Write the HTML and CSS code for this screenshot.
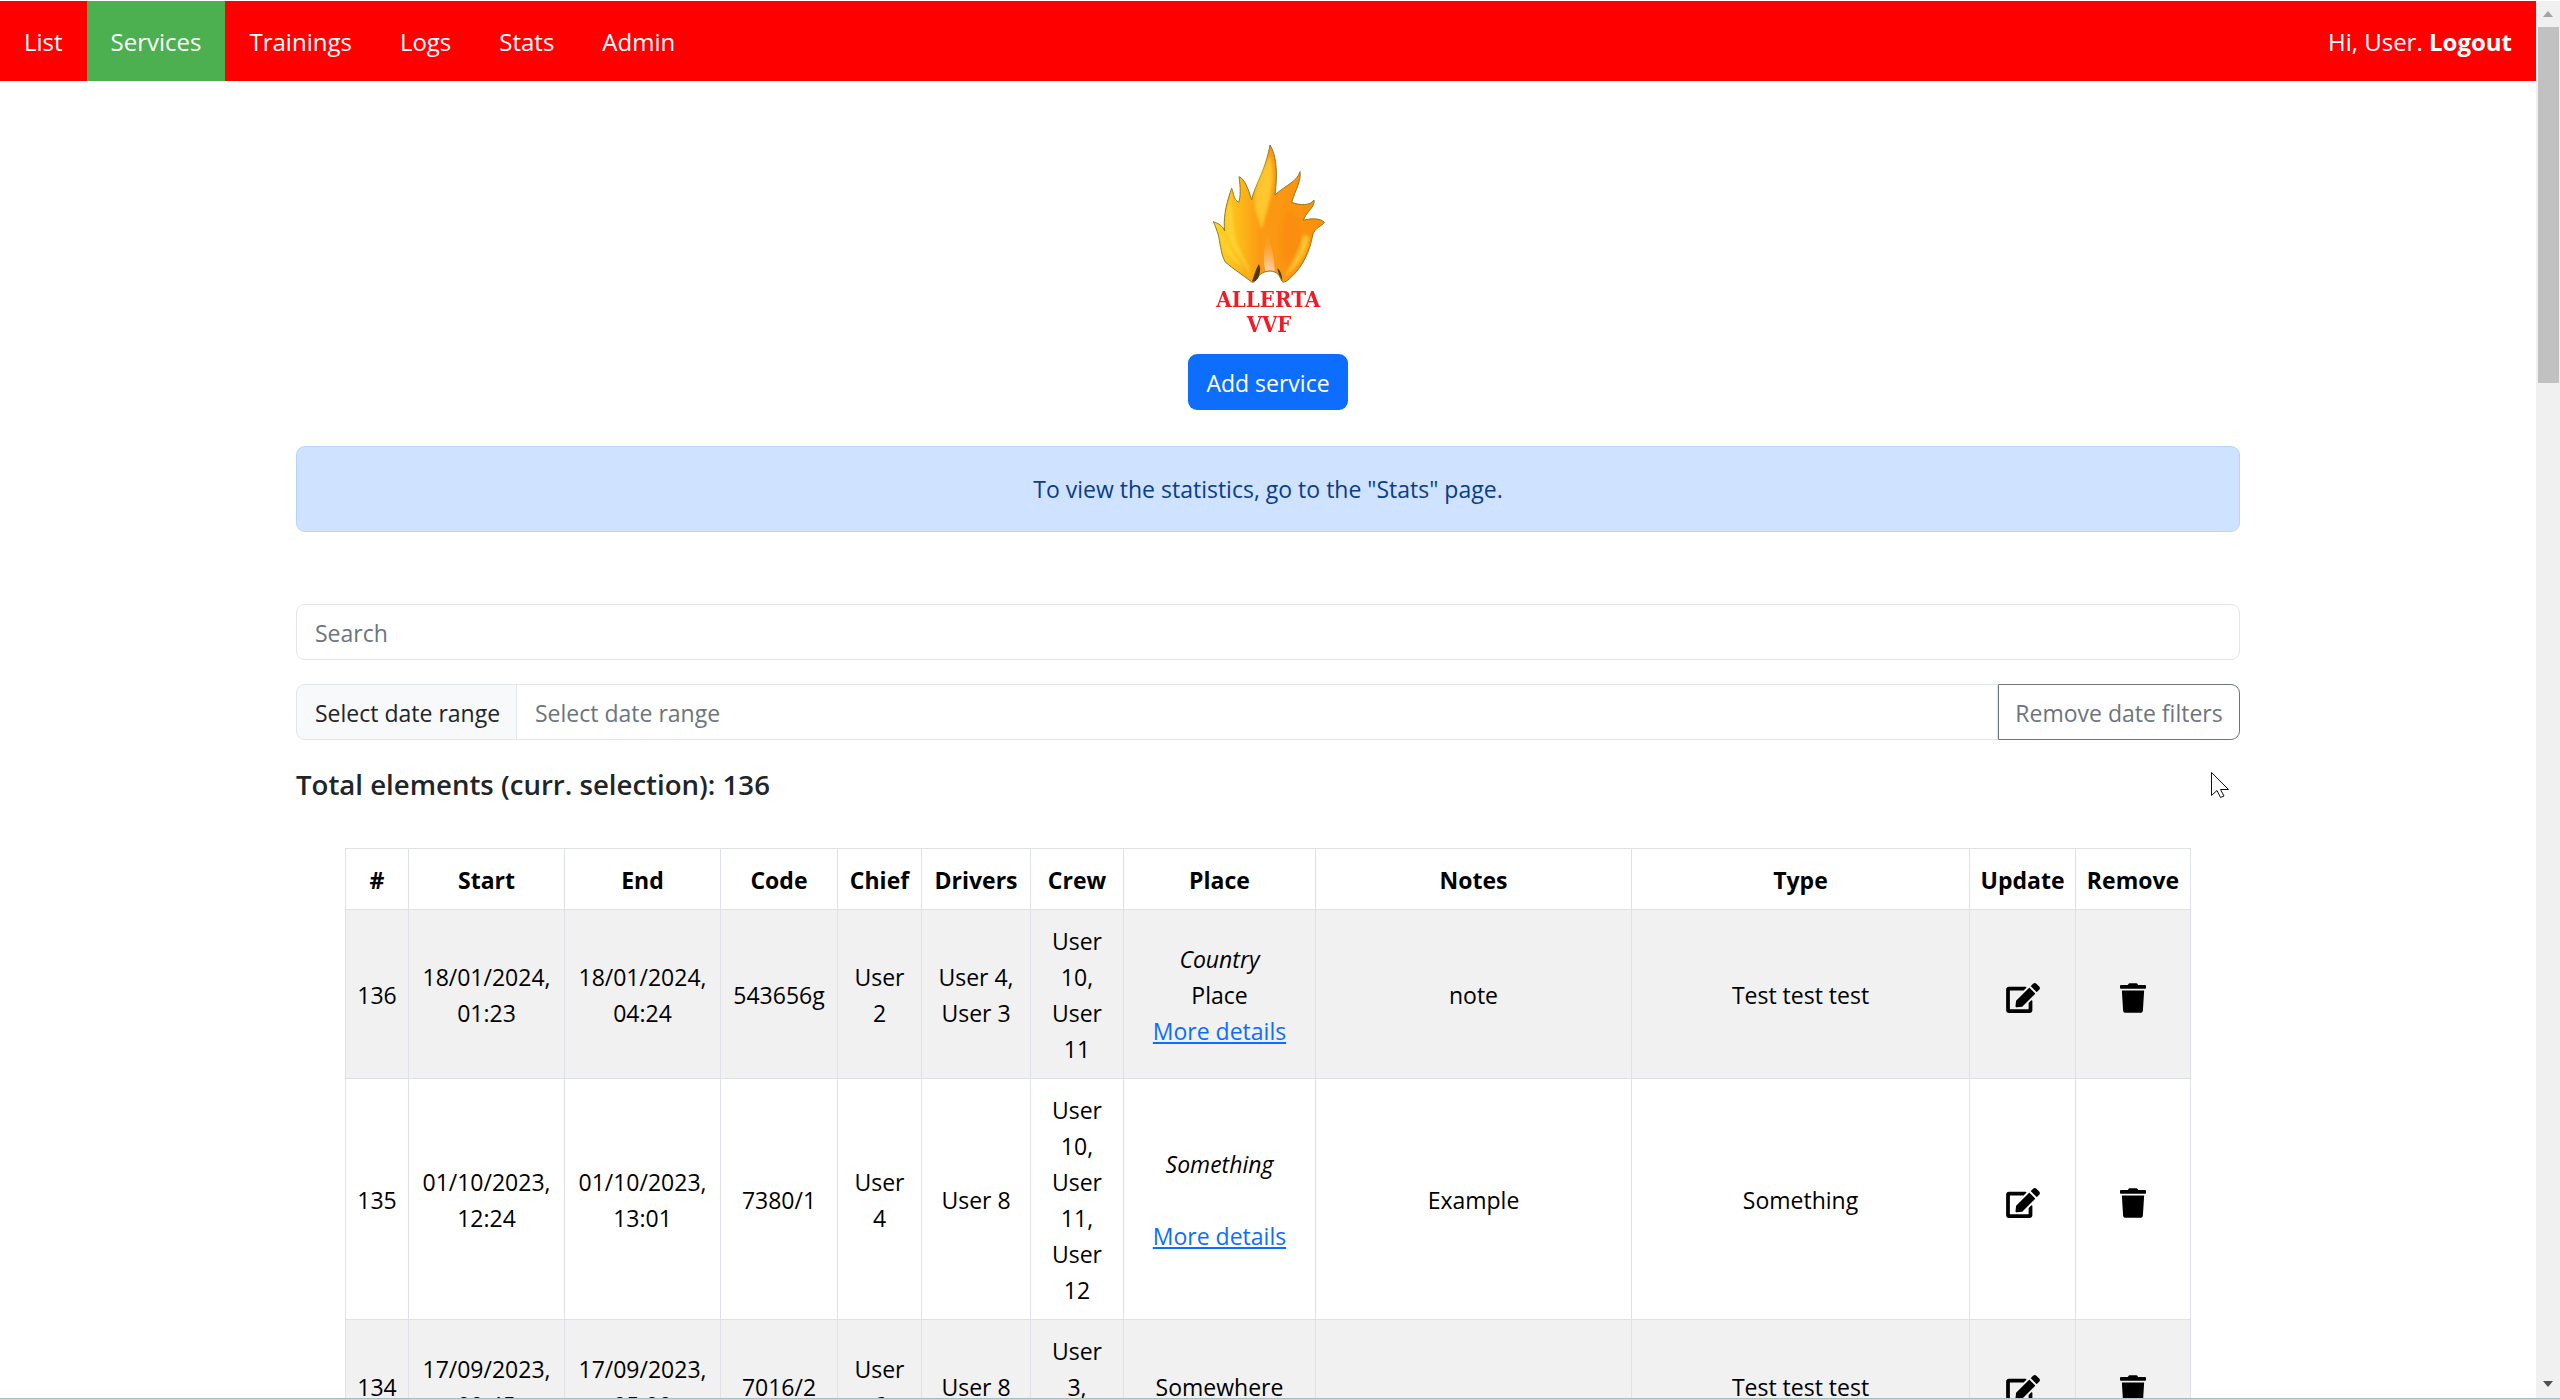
FILE: index.html
```html
<!DOCTYPE html>
<html lang="en">

<head>
    <meta charset="UTF-8">
    <meta name="viewport" content="width=device-width, initial-scale=1.0">
    <title>Allerta VVF - Services</title>
    <link rel="stylesheet" href="styles.css">
</head>

<body>
    <svg class="icon-defs" aria-hidden="true">
        <symbol id="icon-edit" viewBox="0 0 576 512">
            <path d="M402.6 83.2l90.2 90.2c3.8 3.8 3.8 10 0 13.8L274.4 405.6l-92.8 10.3c-12.4 1.4-22.9-9.1-21.5-21.5l10.3-92.8L388.8 83.2c3.8-3.8 10-3.8 13.8 0zm162-22.9l-48.8-48.8c-15.2-15.2-39.9-15.2-55.2 0l-35.4 35.4c-3.8 3.8-3.8 10 0 13.8l90.2 90.2c3.8 3.8 10 3.8 13.8 0l35.4-35.4c15.2-15.3 15.2-40 0-55.2zM384 346.2V448H64V128h229.8c3.2 0 6.2-1.3 8.5-3.5l40-40c7.6-7.6 2.2-20.5-8.5-20.5H48C21.5 64 0 85.5 0 112v352c0 26.5 21.5 48 48 48h352c26.5 0 48-21.5 48-48V306.2c0-10.7-12.9-16-20.5-8.5l-40 40c-2.2 2.3-3.5 5.3-3.5 8.5z"/>
        </symbol>
        <symbol id="icon-trash" viewBox="0 0 448 512">
            <path d="M432 32H312l-9.4-18.7A24 24 0 0 0 281.1 0H166.8a23.72 23.72 0 0 0-21.4 13.3L136 32H16A16 16 0 0 0 0 48v32a16 16 0 0 0 16 16h416a16 16 0 0 0 16-16V48a16 16 0 0 0-16-16zM53.2 467a48 48 0 0 0 47.9 45h245.8a48 48 0 0 0 47.9-45L416 128H32z"/>
        </symbol>
    </svg>

    <div class="page">
        <nav class="topbar">
            <a href="#">List</a>
            <a href="#" class="active">Services</a>
            <a href="#">Trainings</a>
            <a href="#">Logs</a>
            <a href="#">Stats</a>
            <a href="#">Admin</a>
            <span class="user-info">Hi, User. <a href="#" class="logout">Logout</a></span>
        </nav>

        <div class="logo-block">
            <svg class="logo" viewBox="-6 0 480 630" role="img" aria-label="Allerta VVF">
                <defs>
                    <linearGradient id="flame-outer" x1="0" y1="0" x2="1" y2="0">
                        <stop offset="0" stop-color="#ffd62a"/>
                        <stop offset="0.22" stop-color="#fdbb1a"/>
                        <stop offset="0.42" stop-color="#fb9a14"/>
                        <stop offset="1" stop-color="#fb8f0d"/>
                    </linearGradient>
                    <linearGradient id="flame-core" x1="0" y1="0" x2="0" y2="1">
                        <stop offset="0" stop-color="#fd9c12" stop-opacity="0.1"/>
                        <stop offset="1" stop-color="#ffd0b0"/>
                    </linearGradient>
                    <filter id="flame-soft" x="-10%" y="-10%" width="120%" height="120%">
                        <feGaussianBlur stdDeviation="4"/>
                    </filter>
                </defs>
                <path class="flame-body" d="M185 441C165 425 130 402 105 380C92 355 90 320 85 300C80 285 76 272 70 260C85 265 98 272 104 288C100 255 105 215 125 160C133 178 128 190 146 202C152 185 152 160 147 125C165 133 174 160 185 195C190 160 226 110 240 30C258 60 264 105 255 180C286 150 320 142 330 110C334 138 316 165 305 202C330 212 362 212 372 195C376 216 350 228 340 256C360 250 390 248 403 262C396 274 376 276 368 300C360 350 336 395 310 420C292 438 282 446 275 438C268 420 262 410 240 408C216 410 206 420 196 438C192 442 188 443 185 441Z"/>
                <g filter="url(#flame-soft)">
                    <path class="flame-light" d="M122 190C104 250 108 300 130 340C150 370 170 395 184 425C176 380 144 350 134 300C128 265 128 230 122 200Z"/>
                    <path class="flame-light" d="M238 60C218 110 192 150 194 205C196 240 208 250 214 285C228 235 244 190 248 135C250 105 246 80 238 60Z"/>
                    <path class="flame-light" d="M90 290C95 330 120 375 160 400C140 370 112 335 90 290Z"/>
                    <path class="flame-light" d="M340 300C330 345 310 385 282 425C320 400 350 360 358 305Z"/>
                    <path class="flame-deep" d="M300 225C270 260 265 330 290 400C320 370 340 330 332 280C325 260 312 245 300 225Z"/>
                </g>
                <path class="flame-core" d="M232 290C222 330 218 375 226 408C236 405 246 405 254 408C254 370 244 330 232 290Z"/>
                <path class="flame-dark" d="M186 439C192 425 196 405 206 388C214 398 210 415 205 428C199 436 193 442 186 439Z"/>
                <path class="flame-dark" d="M262 400C270 404 276 420 277 437C270 425 264 414 262 400Z"/>
                <text class="logo-text" x="235" y="515" textLength="312" lengthAdjust="spacingAndGlyphs">ALLERTA</text>
                <text class="logo-text" x="237" y="592" textLength="134" lengthAdjust="spacingAndGlyphs">VVF</text>
            </svg>
            <a href="#" class="btn-add">Add service</a>
        </div>

        <div class="container">
            <div class="alert">To view the statistics, go to the "Stats" page.</div>

            <input class="search" type="text" placeholder="Search">

            <div class="date-group">
                <span class="date-label">Select date range</span>
                <input class="date-input" type="text" placeholder="Select date range">
                <button type="button" class="btn-remove">Remove date filters</button>
            </div>

            <div class="total-row">
                <h5>Total elements (curr. selection): 136</h5>
                <svg class="cursor" viewBox="0 0 18 26">
                    <path d="M0.5 0.5V23.5L6 18.5L9.5 25.5L13 24L9.5 17.5H17.5Z"/>
                </svg>
            </div>

            <table>
                <thead>
                    <tr>
                        <th>#</th>
                        <th>Start</th>
                        <th>End</th>
                        <th>Code</th>
                        <th>Chief</th>
                        <th>Drivers</th>
                        <th>Crew</th>
                        <th>Place</th>
                        <th>Notes</th>
                        <th>Type</th>
                        <th>Update</th>
                        <th>Remove</th>
                    </tr>
                </thead>
                <tbody>
                    <tr>
                        <td>136</td>
                        <td>18/01/2024,<br>01:23</td>
                        <td>18/01/2024,<br>04:24</td>
                        <td>543656g</td>
                        <td>User<br>2</td>
                        <td>User 4,<br>User 3</td>
                        <td>User<br>10,<br>User<br>11</td>
                        <td><i>Country</i><br>Place<br><a href="#">More details</a></td>
                        <td>note</td>
                        <td>Test test test</td>
                        <td><svg class="icon icon-wide"><use href="#icon-edit"/></svg></td>
                        <td><svg class="icon icon-narrow"><use href="#icon-trash"/></svg></td>
                    </tr>
                    <tr>
                        <td>135</td>
                        <td>01/10/2023,<br>12:24</td>
                        <td>01/10/2023,<br>13:01</td>
                        <td>7380/1</td>
                        <td>User<br>4</td>
                        <td>User 8</td>
                        <td>User<br>10,<br>User<br>11,<br>User<br>12</td>
                        <td><i>Something</i><br><br><a href="#">More details</a></td>
                        <td>Example</td>
                        <td>Something</td>
                        <td><svg class="icon icon-wide"><use href="#icon-edit"/></svg></td>
                        <td><svg class="icon icon-narrow"><use href="#icon-trash"/></svg></td>
                    </tr>
                    <tr>
                        <td>134</td>
                        <td>17/09/2023,<br>00:45</td>
                        <td>17/09/2023,<br>05:00</td>
                        <td>7016/2</td>
                        <td>User<br>6</td>
                        <td>User 8</td>
                        <td>User<br>3,<br>User 5</td>
                        <td><br>Somewhere<br><a href="#">More details</a></td>
                        <td></td>
                        <td>Test test test</td>
                        <td><svg class="icon icon-wide"><use href="#icon-edit"/></svg></td>
                        <td><svg class="icon icon-narrow"><use href="#icon-trash"/></svg></td>
                    </tr>
                </tbody>
            </table>
        </div>
    </div>

    <div class="scrollbar">
        <span class="arrow-up"></span>
        <span class="thumb"></span>
        <span class="arrow-down"></span>
    </div>
</body>

</html>
```

FILE: styles.css
```css
html,
body {
    height: 100%;
    margin: 0;
}

body {
    box-sizing: border-box;
    display: flex;
    overflow: hidden;
    border-top: 1px solid #fff;
    border-bottom: 1px solid #a8bfc0;
    background: #fff;
    color: #000;
    font-family: "Open Sans", "Noto Sans", sans-serif;
    font-size: 23px;
    line-height: 36px;
}

.icon-defs {
    display: none;
}

.page {
    flex: 1;
    min-width: 0;
    overflow: hidden;
}

/* top bar */
.topbar {
    display: flex;
    height: 80px;
    background: #f00;
    font-size: 24px;
    line-height: 82px;
}

.topbar > a {
    padding: 0 24px;
    color: #fff;
    text-decoration: none;
}

.topbar > a.active {
    background: #4caf50;
}

.user-info {
    margin-left: auto;
    padding-right: 24px;
    color: #fff;
}

.logout {
    color: #fff;
    font-weight: 700;
    text-decoration: none;
}

/* logo and add button */
.logo-block {
    display: flex;
    flex-direction: column;
    align-items: center;
    padding-top: 54px;
}

.logo {
    display: block;
    width: 160px;
    height: 210px;
}

.flame-body {
    fill: url(#flame-outer);
    stroke: #8d7a1e;
    stroke-width: 3;
}

.flame-light {
    fill: #ffd83a;
    opacity: 0.7;
}

.flame-deep {
    fill: #fb8a0a;
    opacity: 0.7;
}

.flame-core {
    fill: url(#flame-core);
}

.flame-dark {
    fill: #4a3a14;
}

.logo-text {
    fill: #ee1c25;
    font-family: "DejaVu Serif", serif;
    font-size: 68px;
    font-weight: 700;
    text-anchor: middle;
}

.btn-add {
    box-sizing: border-box;
    display: block;
    width: 160px;
    height: 56px;
    margin-top: 9px;
    border-radius: 9px;
    background: #0d6efd;
    color: #fff;
    line-height: 58px;
    text-align: center;
    text-decoration: none;
}

/* main column */
.container {
    width: 1944px;
    margin: 36px auto 0;
}

.alert {
    box-sizing: border-box;
    height: 86px;
    border: 1px solid #b6d4fe;
    border-radius: 9px;
    background: #cfe2ff;
    color: #0a3d8a;
    line-height: 85px;
    text-align: center;
}

input,
button {
    font: inherit;
}

input::placeholder {
    color: #6c757d;
    opacity: 1;
}

.search {
    box-sizing: border-box;
    display: block;
    width: 100%;
    height: 56px;
    margin-top: 72px;
    padding: 2px 18px 0;
    border: 1px solid #e2e5e9;
    border-radius: 9px;
    outline: none;
}

.date-group {
    display: flex;
    height: 56px;
    margin-top: 24px;
}

.date-label {
    box-sizing: border-box;
    width: 221px;
    padding: 0 18px;
    border: 1px solid #e2e5e9;
    border-radius: 9px 0 0 9px;
    background: #f8f9fa;
    color: #212529;
    line-height: 56px;
    white-space: nowrap;
}

.date-input {
    flex: 1;
    min-width: 0;
    padding: 2px 18px 0;
    border: 1px solid #e2e5e9;
    border-left: none;
    outline: none;
}

.btn-remove {
    box-sizing: border-box;
    width: 242px;
    padding: 2px 0 0;
    border: 1px solid #6c757d;
    border-radius: 0 9px 9px 0;
    background: #fff;
    color: #6c757d;
}

.total-row {
    position: relative;
    margin-top: 24px;
}

.total-row h5 {
    margin: 0;
    color: #212529;
    font-size: 27.6px;
    font-weight: 600;
    line-height: 40px;
}

.cursor {
    position: absolute;
    top: 8px;
    right: 11px;
    width: 18px;
    height: 26px;
    fill: #fff;
    stroke: #111;
    stroke-width: 1;
}

/* table */
table {
    width: 1845px;
    margin: 44px auto 0;
    border-collapse: collapse;
    table-layout: fixed;
}

th,
td {
    box-sizing: border-box;
    padding: 13px 4px 11px;
    border: 1px solid #dee2e6;
    text-align: center;
    vertical-align: middle;
}

th {
    padding-right: 0;
    padding-left: 0;
    font-weight: 700;
}

tbody tr:nth-child(odd) {
    background: #f1f1f1;
}

td a {
    color: #0d6efd;
}

th:nth-child(1) { width: 63px; }
th:nth-child(2) { width: 156px; }
th:nth-child(3) { width: 156px; }
th:nth-child(4) { width: 117px; }
th:nth-child(5) { width: 84px; }
th:nth-child(6) { width: 109px; }
th:nth-child(7) { width: 93px; }
th:nth-child(8) { width: 192px; }
th:nth-child(9) { width: 316px; }
th:nth-child(10) { width: 338px; }
th:nth-child(11) { width: 106px; }
th:nth-child(12) { width: 115px; }

.icon {
    height: 30px;
    vertical-align: -9px;
}

.icon-wide {
    width: 34px;
}

.icon-narrow {
    width: 26px;
}

/* fake window scrollbar */
.scrollbar {
    position: relative;
    flex: none;
    width: 24px;
    background: #f0f0f0;
}

.thumb {
    position: absolute;
    top: 26px;
    left: 2px;
    width: 21px;
    height: 356px;
    background: #c1c1c1;
}

.arrow-up,
.arrow-down {
    position: absolute;
    left: 7px;
    width: 0;
    height: 0;
    border-right: 5px solid transparent;
    border-left: 5px solid transparent;
}

.arrow-up {
    top: 10px;
    border-bottom: 6px solid #a3a3a3;
}

.arrow-down {
    bottom: 11px;
    border-top: 6px solid #505050;
}
```
